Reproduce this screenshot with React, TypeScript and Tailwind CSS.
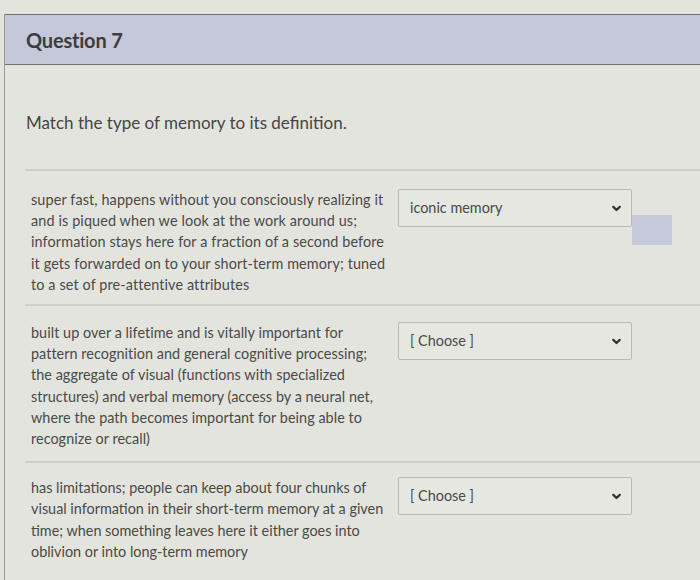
import React from 'react';

const rows = [
  {
    lines: [
      'super fast, happens without you consciously realizing it',
      'and is piqued when we look at the work around us;',
      'information stays here for a fraction of a second before',
      'it gets forwarded on to your short-term memory; tuned',
      'to a set of pre-attentive attributes',
    ],
    value: 'iconic memory',
    pad: 'pt-[18px] pb-[9px]',
    wide: 'tracking-[0.12px]',
    flag: true,
  },
  {
    lines: [
      'built up over a lifetime and is vitally important for',
      'pattern recognition and general cognitive processing;',
      'the aggregate of visual (functions with specialized',
      'structures) and verbal memory (access by a neural net,',
      'where the path becomes important for being able to',
      'recognize or recall)',
    ],
    value: '[ Choose ]',
    pad: 'pt-[16px] pb-[12px]',
    wide: 'tracking-[0.05px]',
    flag: false,
  },
  {
    lines: [
      'has limitations; people can keep about four chunks of',
      'visual information in their short-term memory at a given',
      'time; when something leaves here it either goes into',
      'oblivion or into long-term memory',
    ],
    value: '[ Choose ]',
    pad: 'pt-[14px] pb-[12px]',
    wide: 'tracking-[0px]',
    flag: false,
  },
];

const Chevron = () => (
  <svg width="11" height="11" viewBox="0 0 12 12" className="text-[#333333]">
    <path d="M2.5 4.2 L6 7.6 L9.5 4.2" fill="none" stroke="currentColor" strokeWidth="2.5" strokeLinecap="round" strokeLinejoin="round" />
  </svg>
);

export default function App() {
  return (
    <div
      className="w-[700px] h-[580px] overflow-hidden bg-[#e3e4de] pt-[14px] pl-[4px] text-[#4a4a48]"
      style={{ fontFamily: 'Lato, "Open Sans", sans-serif' }}
    >
      <div className="border-l border-[#9a9ca2] h-full">
        {/* header */}
        <div className="h-[51px] bg-[#c4c8d8] border-y border-[#6e7078] flex items-center pl-[21px]">
          <h2 className="text-[20px] font-bold text-[#3c3c40] tracking-[-0.2px]">Question 7</h2>
        </div>

        <div className="pt-[46px]">
          <p className="pl-[21px] text-[17px] leading-[24px] text-[#454545]">Match the type of memory to its definition.</p>
        </div>

        <div className="mt-[34px] ml-[20px]">
          {rows.map((r, i) => (
            <div key={i} className={`border-t-2 border-[#cfd0cb] flex ${r.pad}`}>
              <p className={`w-[367px] pl-[6px] text-[14.4px] leading-[21.2px] text-[#4a4a48] ${r.wide}`}>
                {r.lines.map((l, j) => (
                  <span key={j} className="block whitespace-nowrap">{l}</span>
                ))}
              </p>
              <div className="relative ml-[6px]">
                <div className="w-[234px] h-[38px] border border-[#b9bab6] rounded-[2px] bg-[#e6e7e1] flex items-center justify-between pl-[11px] pr-[9px]">
                  <span className="text-[14.4px] text-[#4a4a48]">{r.value}</span>
                  <Chevron />
                </div>
                {r.flag && (
                  <div className="absolute left-[234px] top-[26px] w-[40px] h-[30px] bg-[#c6cadb]" />
                )}
              </div>
            </div>
          ))}
        </div>
      </div>
    </div>
  );
}
